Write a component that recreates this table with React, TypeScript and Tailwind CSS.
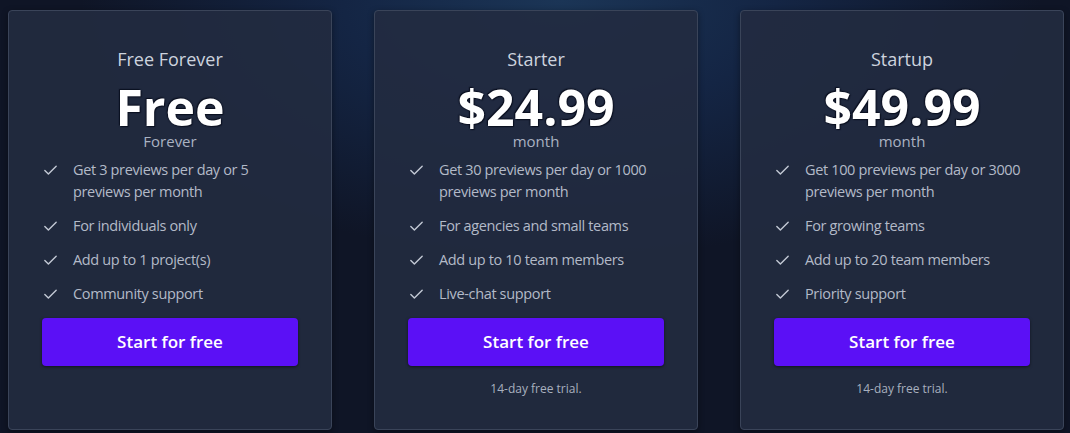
import { Check } from 'lucide-react';

type Plan = {
  name: string;
  price: string;
  period: string;
  features: string[];
  trial?: string;
};

const plans: Plan[] = [
  {
    name: 'Free Forever',
    price: 'Free',
    period: 'Forever',
    features: [
      'Get 3 previews per day or 5 previews per month',
      'For individuals only',
      'Add up to 1 project(s)',
      'Community support',
    ],
  },
  {
    name: 'Starter',
    price: '$24.99',
    period: 'month',
    features: [
      'Get 30 previews per day or 1000 previews per month',
      'For agencies and small teams',
      'Add up to 10 team members',
      'Live-chat support',
    ],
    trial: '14-day free trial.',
  },
  {
    name: 'Startup',
    price: '$49.99',
    period: 'month',
    features: [
      'Get 100 previews per day or 3000 previews per month',
      'For growing teams',
      'Add up to 20 team members',
      'Priority support',
    ],
    trial: '14-day free trial.',
  },
];

function PlanCard({ plan }: { plan: Plan }) {
  return (
    <div className="flex flex-col rounded-[4px] border border-[#3a4459] bg-[#222b40]/90 px-[33px] pt-[35px] shadow-[0_2px_6px_rgba(0,0,0,0.4)]">
      <h3 className="text-center text-[18px] leading-[26px] text-[#cdd3de]">{plan.name}</h3>
      <div className="mt-[11px] text-center text-[50px] font-bold leading-[48px] text-white [text-shadow:0_0_2px_#0b1020,1px_1px_1px_#0b1020,-1px_-1px_1px_#0b1020]">
        {plan.price}
      </div>
      <div className="text-center text-[15px] leading-[20px] text-[#aab2c2]">{plan.period}</div>
      <ul className="mt-[8px] flex flex-col gap-[12px]">
        {plan.features.map((f) => (
          <li key={f} className="flex items-start gap-[14px] text-[14.5px] leading-[22px] tracking-[-0.35px] text-[#b3bac8]">
            <Check className="mt-[3px] h-[17px] w-[17px] shrink-0 text-[#c2c8d4]" strokeWidth={2} />
            <span>{f}</span>
          </li>
        ))}
      </ul>
      <button className="mt-[13px] h-[48px] w-full rounded-[4px] bg-[#5b10f6] text-[17px] font-semibold text-white shadow-[0_1px_3px_rgba(0,0,0,0.5)]">
        Start for free
      </button>
      {plan.trial && (
        <p className="mt-[14px] text-center text-[12px] text-[#a8b0bf]">{plan.trial}</p>
      )}
    </div>
  );
}

export default function App() {
  return (
    <div
      className="h-[433px] w-[1070px] overflow-hidden bg-[#0f1526] bg-[radial-gradient(ellipse_480px_260px_at_560px_0px,#1b3556_0%,#142544_45%,#0f1526_100%)] pt-[10px] pl-[8px] pr-[6px]"
      style={{ fontFamily: '"Open Sans", "Noto Sans", sans-serif' }}
    >
      <div className="grid h-[420px] grid-cols-3 gap-[42px]">
        {plans.map((p) => (
          <PlanCard key={p.name} plan={p} />
        ))}
      </div>
    </div>
  );
}
